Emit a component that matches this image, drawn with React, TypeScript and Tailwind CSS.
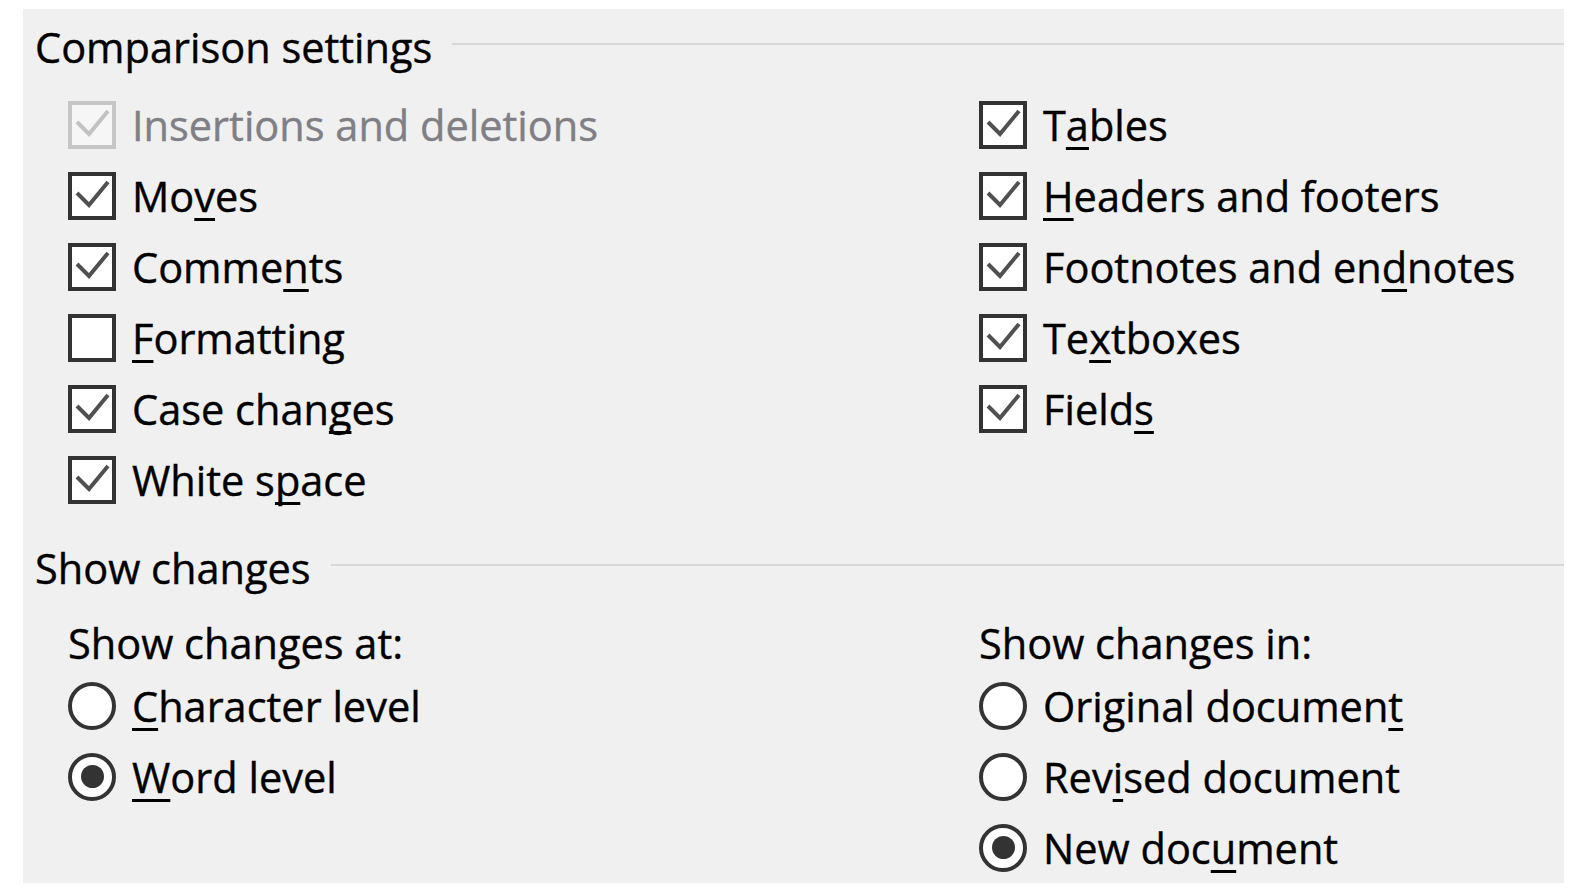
import React from "react";

type Option = {
  label: string;
  hotkey: number;
  checked?: boolean;
  disabled?: boolean;
};

const leftChecks: Option[] = [
  { label: "Insertions and deletions", hotkey: -1, checked: true, disabled: true },
  { label: "Moves", hotkey: 2, checked: true },
  { label: "Comments", hotkey: 5, checked: true },
  { label: "Formatting", hotkey: 0, checked: false },
  { label: "Case changes", hotkey: 9, checked: true },
  { label: "White space", hotkey: 7, checked: true },
];

const rightChecks: Option[] = [
  { label: "Tables", hotkey: 1, checked: true },
  { label: "Headers and footers", hotkey: 0, checked: true },
  { label: "Footnotes and endnotes", hotkey: 16, checked: true },
  { label: "Textboxes", hotkey: 2, checked: true },
  { label: "Fields", hotkey: 5, checked: true },
];

const levelOptions: Option[] = [
  { label: "Character level", hotkey: 0 },
  { label: "Word level", hotkey: 0, checked: true },
];

const targetOptions: Option[] = [
  { label: "Original document", hotkey: 16 },
  { label: "Revised document", hotkey: 3 },
  { label: "New document", hotkey: 7, checked: true },
];

const Label = ({ text, hotkey }: { text: string; hotkey: number }) => {
  if (hotkey < 0) return <>{text}</>;
  return (
    <>
      {text.slice(0, hotkey)}
      <span className="underline decoration-[3px] underline-offset-[6px] [text-decoration-skip-ink:none]">
        {text[hotkey]}
      </span>
      {text.slice(hotkey + 1)}
    </>
  );
};

const CheckRow = ({ opt }: { opt: Option }) => (
  <div className="flex items-center h-[71px]">
    <div
      className={`w-[48px] h-[48px] shrink-0 border-[4px] flex items-center justify-center ${
        opt.disabled ? "border-[#c6c6c6] bg-[#f6f6f6]" : "border-[#333333] bg-white"
      }`}
    >
      {opt.checked && (
        <svg width="40" height="40" viewBox="0 0 40 40" fill="none">
          <path
            d="M5 17 L17 29 L36 6"
            stroke={opt.disabled ? "#c2c2c2" : "#505050"}
            strokeWidth="4"
          />
        </svg>
      )}
    </div>
    <span
      className={`ml-[16px] leading-[48px] whitespace-nowrap ${
        opt.disabled ? "text-[#7f7f85]" : "text-black"
      }`}
    >
      <Label text={opt.label} hotkey={opt.hotkey} />
    </span>
  </div>
);

const RadioRow = ({ opt }: { opt: Option }) => (
  <div className="flex items-center h-[71px]">
    <div className="w-[48px] h-[48px] shrink-0 rounded-full border-[4px] border-[#333333] bg-white flex items-center justify-center">
      {opt.checked && <div className="w-[23px] h-[23px] rounded-full bg-[#333333]" />}
    </div>
    <span className="ml-[16px] leading-[48px] whitespace-nowrap text-black">
      <Label text={opt.label} hotkey={opt.hotkey} />
    </span>
  </div>
);

const GroupHeading = ({ title }: { title: string }) => (
  <div className="flex items-start h-[48px]">
    <span className="leading-[48px] whitespace-nowrap text-black">{title}</span>
    <div className="flex-1 ml-[20px] mt-[20px] h-[2px] bg-[#d7d7d7]" />
  </div>
);

export default function App() {
  return (
    <div
      className="min-h-screen bg-white pl-[23px] pt-[9px] text-[41.5px] font-medium [-webkit-text-stroke:0.4px_currentColor]"
      style={{ fontFamily: '"Open Sans", "Noto Sans", sans-serif' }}
    >
      <div className="w-[1541px] h-[874px] bg-[#f0f0f0] pl-[12px] pt-[14px] overflow-hidden">
        <GroupHeading title="Comparison settings" />

        {/* checkbox columns */}
        <div className="flex mt-[18px] ml-[33px]">
          <div className="w-[911px] flex flex-col">
            {leftChecks.map((o) => (
              <CheckRow key={o.label} opt={o} />
            ))}
          </div>
          <div className="flex flex-col">
            {rightChecks.map((o) => (
              <CheckRow key={o.label} opt={o} />
            ))}
          </div>
        </div>

        <div className="mt-[29px]">
          <GroupHeading title="Show changes" />
        </div>

        <div className="flex mt-[27px] ml-[33px]">
          <div className="w-[911px] flex flex-col">
            <div className="h-[48px] leading-[48px] text-black mb-[3px]">Show changes at:</div>
            {levelOptions.map((o) => (
              <RadioRow key={o.label} opt={o} />
            ))}
          </div>
          <div className="flex flex-col">
            <div className="h-[48px] leading-[48px] text-black mb-[3px]">Show changes in:</div>
            {targetOptions.map((o) => (
              <RadioRow key={o.label} opt={o} />
            ))}
          </div>
        </div>
      </div>
    </div>
  );
}
